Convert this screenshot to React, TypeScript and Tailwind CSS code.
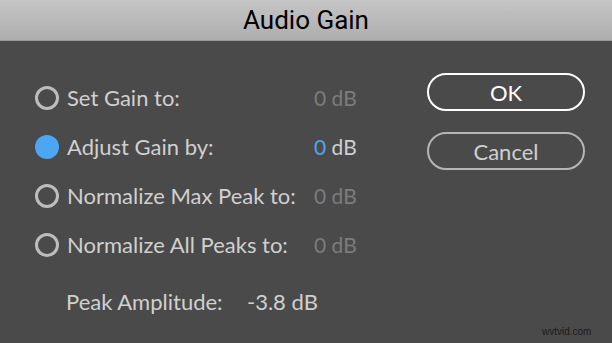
import React from "react";

interface GainOption {
  label: string;
  value: string;
  selected?: boolean;
}

const options: GainOption[] = [
  { label: "Set Gain to:", value: "0" },
  { label: "Adjust Gain by:", value: "0", selected: true },
  { label: "Normalize Max Peak to:", value: "0" },
  { label: "Normalize All Peaks to:", value: "0" },
];

const Radio = ({ checked }: { checked?: boolean }) =>
  checked ? (
    <span className="block w-[24px] h-[24px] shrink-0 rounded-full bg-[#4ca6f2]" />
  ) : (
    <span className="block w-[24px] h-[24px] shrink-0 rounded-full border-[3px] border-[#bdbdbd]" />
  );

export default function App() {
  return (
    <div className="relative w-[612px] h-[343px] bg-[#4a4a4a] flex flex-col font-['Lato',sans-serif] overflow-hidden">
      {/* title bar */}
      <div className="h-[41px] shrink-0 flex items-center justify-center bg-gradient-to-b from-[#c6c5c6] to-[#afaeaf] border-b border-[#9a9a9a]">
        <span className="text-[26px] leading-none text-black font-['Roboto',sans-serif]">Audio Gain</span>
      </div>

      <div className="flex flex-1 pl-[35px] pr-[27px] pt-[32px]">
        <div className="flex flex-col flex-1">
          {options.map((o) => (
            <div key={o.label} className="flex items-center h-[49px]">
              <Radio checked={o.selected} />
              <span className="ml-[8px] w-[247px] text-[22px] text-[#d0d0d0] whitespace-nowrap">{o.label}</span>
              <span className="text-[21px] whitespace-nowrap">
                <span className={o.selected ? "text-[#4ca6f2]" : "text-[#7c7c7c]"}>{o.value}</span>
                <span className={o.selected ? "text-[#d0d0d0]" : "text-[#7c7c7c]"}> dB</span>
              </span>
            </div>
          ))}
          <div className="flex items-center h-[40px] mt-[12px] ml-[31px] text-[22px] text-[#d0d0d0]">
            <span className="w-[181px]">Peak Amplitude:</span>
            <span>-3.8 dB</span>
          </div>
        </div>

        <div className="flex flex-col gap-[21px] w-[158px]">
          <button className="h-[38px] rounded-full border-2 border-white text-white text-[22px]">OK</button>
          <button className="h-[38px] rounded-full border-2 border-[#b5b5b5] text-[#cfcfcf] text-[22px]">Cancel</button>
        </div>
      </div>

      <div className="absolute left-[542px] top-[327px] text-[10px] leading-none text-[#1a1a1a] font-['Liberation_Sans',sans-serif]">wvtvid.com</div>
    </div>
  );
}
